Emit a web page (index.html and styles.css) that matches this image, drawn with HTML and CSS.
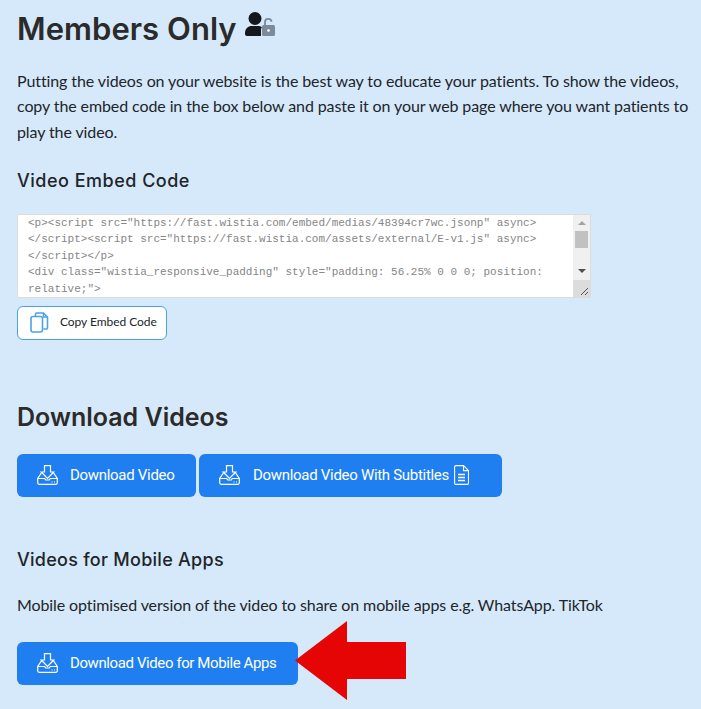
FILE: index.html
```html
<!DOCTYPE html>
<html lang="en">
<head>
<meta charset="utf-8">
<title>Members Only</title>
<link rel="stylesheet" href="styles.css">
</head>
<body>
<main class="page">
  <h1 class="title">Members Only
    <svg class="member-icon" width="30" height="24" viewBox="0 0 30 24" aria-hidden="true">
      <circle cx="10" cy="6.500" r="6.500" fill="#14181d"/>
      <path d="M0 21.500c0-5 3-7.500 7-7.500h6c1.500 0 3 .4 4 1.200-.6.6-1 1.500-1 2.500V24H2c-1.200 0-2-.8-2-2z" fill="#14181d"/>
      <path d="M20 13v-3c0-2 1.500-3.200 3.200-3.200s3.300 1.200 3.300 3" fill="none" stroke="#7d8a99" stroke-width="1.800"/>
      <rect x="17" y="13" width="13" height="11" rx="1.500" fill="#7d8a99"/>
      <circle cx="23.500" cy="18.500" r="1.300" fill="#fff"/>
    </svg>
  </h1>
  <p class="intro">Putting the videos on your website is the best way to educate your patients. To show the videos, copy the embed code in the box below and paste it on your web page where you want patients to play the video.</p>

  <h2 class="subtitle embed-title">Video Embed Code</h2>
  <div class="code-box">
    <pre class="code-text">&lt;p&gt;&lt;script src="https://fast.wistia.com/embed/medias/48394cr7wc.jsonp" async&gt;
&lt;/script&gt;&lt;script src="https://fast.wistia.com/assets/external/E-v1.js" async&gt;
&lt;/script&gt;&lt;/p&gt;
&lt;div class="wistia_responsive_padding" style="padding: 56.25% 0 0 0; position:
relative;"&gt;</pre>
    <div class="scrollbar">
      <span class="arrow-up"></span>
      <span class="thumb"></span>
      <span class="arrow-down"></span>
      <span class="corner">
        <svg width="17" height="17" viewBox="0 0 17 17" aria-hidden="true"><path d="M8 15l7-7M12 15l3-3" stroke="#555" stroke-width="1" fill="none"/></svg>
      </span>
    </div>
  </div>
  <button class="copy-btn" type="button">
    <svg width="19" height="21" viewBox="0 0 19 21" fill="none" stroke="#4aa3e8" stroke-width="1.600" aria-hidden="true">
      <path d="M5.500 4V2a1 1 0 0 1 1-1h7l4 4v11a1 1 0 0 1-1 1h-3"/>
      <path d="M13.500 1v4h4"/>
      <rect x="1" y="4.500" width="11.500" height="15.500" rx="2"/>
    </svg>
    <span class="copy-label">Copy Embed Code</span>
  </button>

  <h2 class="section-title">Download Videos</h2>
  <div class="btn-row">
    <a class="dl-btn first-btn" href="#">
      <svg class="dl-icon" width="21" height="20" viewBox="0 0 21 20" fill="none" stroke="#fff" stroke-width="1.200" aria-hidden="true"><path d="M7.500 .7h6v6.300h3.300l-6.300 6.500-6.300-6.500h3.300z"/><path d="M4.700 7.500.7 13.500v4.300a1.500 1.500 0 0 0 1.500 1.500h16.600a1.500 1.500 0 0 0 1.500-1.500v-4.300l-4-6"/><path d="M.7 13.500h7l1 1.500h3.600l1-1.500h7"/><path d="M14.500 17h1M17 17h1"/></svg>
      <span>Download Video</span>
    </a>
    <a class="dl-btn second-btn" href="#">
      <svg class="dl-icon" width="21" height="20" viewBox="0 0 21 20" fill="none" stroke="#fff" stroke-width="1.200" aria-hidden="true"><path d="M7.500 .7h6v6.300h3.300l-6.300 6.500-6.300-6.500h3.300z"/><path d="M4.700 7.500.7 13.500v4.300a1.500 1.500 0 0 0 1.500 1.500h16.600a1.500 1.500 0 0 0 1.500-1.500v-4.300l-4-6"/><path d="M.7 13.500h7l1 1.500h3.600l1-1.500h7"/><path d="M14.500 17h1M17 17h1"/></svg>
      <span>Download Video With Subtitles</span>
      <svg class="doc-icon" width="15" height="20" viewBox="0 0 15 20" fill="none" stroke="#fff" stroke-width="1.100" aria-hidden="true"><path d="M2 .6h7.500l5 5V18a1.400 1.400 0 0 1-1.400 1.400H2A1.400 1.400 0 0 1 .6 18V2A1.400 1.400 0 0 1 2 .6z"/><path d="M9.500.6v5h5"/><path d="M4 9.500h7M4 12.500h7M4 15.500h7" stroke-width="1.300"/></svg>
    </a>
  </div>

  <h2 class="subtitle mobile-title">Videos for Mobile Apps</h2>
  <p class="mobile-text">Mobile optimised version of the video to share on mobile apps e.g. WhatsApp. TikTok</p>
  <a class="dl-btn mobile-btn" href="#">
    <svg class="dl-icon" width="21" height="20" viewBox="0 0 21 20" fill="none" stroke="#fff" stroke-width="1.200" aria-hidden="true"><path d="M7.500 .7h6v6.300h3.300l-6.300 6.500-6.300-6.500h3.300z"/><path d="M4.700 7.500.7 13.500v4.300a1.500 1.500 0 0 0 1.500 1.500h16.600a1.500 1.500 0 0 0 1.500-1.500v-4.300l-4-6"/><path d="M.7 13.500h7l1 1.500h3.600l1-1.500h7"/><path d="M14.500 17h1M17 17h1"/></svg>
    <span class="mobile-label">Download Video for Mobile Apps</span>
  </a>
</main>
<svg class="red-arrow" width="112" height="80" viewBox="0 0 112 80" aria-hidden="true"><path d="M0 39.500 52 0v21h59v37H52v21z" fill="#e60505"/></svg>
</body>
</html>
```

FILE: styles.css
```css
* { box-sizing: border-box; }
html, body { margin: 0; height: 100%; }
body {
  background: #d6e9fb;
  color: #212529;
  font-family: "Lato", sans-serif;
  font-size: 16px;
  letter-spacing: -.1px;
  overflow: hidden;
  position: relative;
}
.page { padding: 8px 0 0 17px; width: 692px; }
.title {
  margin: 0;
  font-family: "Inter", sans-serif;
  font-weight: 600;
  font-size: 31px;
  letter-spacing: .05px;
  line-height: 42px;
  color: #2b2b2b;
  display: flex;
  align-items: flex-start;
  gap: 8px;
}
.member-icon { margin-top: 4px; }
.intro {
  margin: 17.500px 0 0;
  line-height: 25.500px;
  color: #212529;
}
.subtitle {
  margin: 0;
  font-family: "Inter", sans-serif;
  font-weight: 500;
  font-size: 18px;
  line-height: 27px;
  color: #212529;
}
.embed-title { margin-top: 23px; letter-spacing: .5px; }
.code-box {
  margin-top: 20px;
  width: 574px;
  height: 84px;
  background: #fff;
  border: 1px solid #dcdcdc;
  display: flex;
  justify-content: space-between;
}
.code-text {
  margin: 0;
  padding: 0 0 0 10px;
  font-family: "Liberation Mono", monospace;
  font-size: 11px;
  letter-spacing: 0;
  line-height: 16.400px;
  color: #868686;
}
.scrollbar {
  width: 17px;
  background: #f0f0f0;
  display: flex;
  flex-direction: column;
  align-items: center;
  position: relative;
}
.arrow-up {
  margin-top: 6px;
  width: 0; height: 0;
  border-left: 4px solid transparent;
  border-right: 4px solid transparent;
  border-bottom: 4px solid #a3a3a3;
}
.thumb {
  margin-top: 6px;
  width: 13px;
  height: 17px;
  background: #c1c1c1;
}
.arrow-down {
  margin-top: 21px;
  width: 0; height: 0;
  border-left: 4px solid transparent;
  border-right: 4px solid transparent;
  border-top: 4px solid #505050;
}
.corner {
  margin-top: auto;
  width: 17px;
  height: 17px;
  background: #dcdcdc;
  display: block;
}
.corner svg { display: block; }
.copy-btn {
  margin-top: 8px;
  width: 150px;
  height: 34px;
  padding: 0 0 1px 12px;
  background: #fff;
  border: 1px solid #4aa3e0;
  border-radius: 6px;
  display: flex;
  align-items: center;
  gap: 11px;
  font-family: "Lato", sans-serif;
  font-size: 12px;
  letter-spacing: -.05px;
  color: #212529;
}
.copy-label { margin-bottom: 3px; }
.section-title {
  margin: 59px 0 0;
  font-family: "Inter", sans-serif;
  font-weight: 600;
  font-size: 25px;
  letter-spacing: 0;
  line-height: 36px;
  color: #2b2b2b;
}
.btn-row { margin-top: 19px; display: flex; gap: 3px; }
.dl-btn {
  height: 43px;
  background: #1f7ff0;
  border-radius: 6px;
  color: #fff;
  text-decoration: none;
  font-family: "Roboto", sans-serif;
  font-size: 15px;
  letter-spacing: -.3px;
  display: flex;
  align-items: center;
  gap: 12px;
  padding: 0 0 1px 20px;
}
.first-btn { width: 179px; }
.second-btn { width: 303px; gap: 13px; }
.doc-icon { margin-left: -8px; }
.mobile-label { letter-spacing: -.4px; }
.mobile-title { margin-top: 49px; letter-spacing: .27px; }
.mobile-text { margin: 19px 0 0; line-height: 25.500px; }
.mobile-btn { margin-top: 24.500px; width: 281px; padding-bottom: 2px; }
.red-arrow { position: absolute; left: 295px; top: 621px; }
```
